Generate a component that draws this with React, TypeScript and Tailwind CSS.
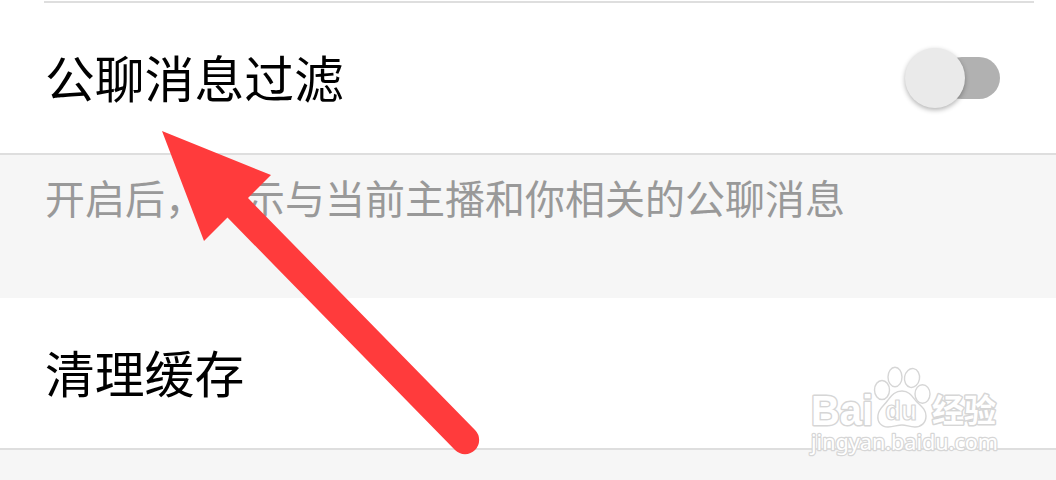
import React, { useState } from 'react';

type SettingRowProps = {
    label: string;
    children?: React.ReactNode;
};

function SettingRow({ label, children }: SettingRowProps) {
    return (
        <div className="flex flex-1 items-center justify-between pl-[45px] pr-14">
            <span className="pb-[2px] text-[49.8px] leading-none text-black">{label}</span>
            {children}
        </div>
    );
}

function Toggle({ checked, onChange }: { checked: boolean; onChange: (value: boolean) => void }) {
    return (
        <button
            role="switch"
            aria-checked={checked}
            aria-label="公聊消息过滤"
            onClick={() => onChange(!checked)}
            className={`flex h-[60px] w-[95px] items-center ${checked ? 'flex-row-reverse' : ''}`}
        >
            <span className="z-10 size-[60px] shrink-0 rounded-full bg-[#eaeaea] shadow-[0_2px_5px_rgba(0,0,0,0.3)]" />
            <span className="-mx-6 h-[42px] w-[59px] shrink-0 rounded-full bg-[#b1b1b1]" />
        </button>
    );
}

function PointerArrow() {
    return (
        <svg className="pointer-events-none absolute inset-0" width="1056" height="480" viewBox="0 0 1056 480">
            <path
                d="M162 131 L271 175 L248 198 L475 430 A14 14 0 0 1 455 450 L227.500 217.500 L204 241 Z"
                fill="#ff3b3c"
            />
        </svg>
    );
}

function Watermark() {
    return (
        <svg
            className="pointer-events-none absolute bottom-2 right-[46px]"
            width="212"
            height="116"
            viewBox="798 356 212 116"
            fill="#fff"
            stroke="#d6d6d6"
            strokeWidth="1.4"
            strokeLinejoin="round"
        >
            <ellipse cx="882" cy="390" rx="7.500" ry="9.500" />
            <ellipse cx="895" cy="377" rx="7" ry="9.800" />
            <ellipse cx="912" cy="378" rx="7.500" ry="9.500" transform="rotate(10 912 378)" />
            <ellipse cx="922.500" cy="394" rx="7.500" ry="9.300" />
            <path d="M902 391 C909 391 912 396 916 401 C921 406 926 409 926 416 C926 423 921 427 915 427 C909 427 907 425 902 425 C897 425 894 427 888 427 C881 427 877 422 878 415 C879 408 884 406 888 400 C892 395 895 391 902 391 Z" />
            <g style={{ paintOrder: 'stroke' }} strokeWidth="3">
                <text x="811" y="425" textLength="62" lengthAdjust="spacingAndGlyphs" className="font-['Liberation_Sans'] text-[42px] font-bold">
                    Bai
                </text>
                <text x="932" y="422" textLength="64" lengthAdjust="spacingAndGlyphs" className="font-['Noto_Sans_CJK_SC'] text-[32px] font-bold">
                    经验
                </text>
                <text x="811" y="450" textLength="187" lengthAdjust="spacingAndGlyphs" strokeWidth="2.500" className="font-['Noto_Sans'] text-[22px]">
                    jingyan.baidu.com
                </text>
            </g>
            <text x="885" y="420" textLength="32" lengthAdjust="spacingAndGlyphs" strokeWidth="1.2" className="font-['Liberation_Sans'] text-[27px] font-bold">
                du
            </text>
        </svg>
    );
}

export default function App() {
    const [filtrado, setFiltrado] = useState(false);

    return (
        <div className="relative flex h-[480px] w-[1056px] flex-col overflow-hidden bg-[#f6f6f6] font-['Noto_Sans_CJK_SC',sans-serif]">
            <div className="flex h-[155px] flex-col border-b-2 border-[#dedede] bg-white pt-px">
                <div className="ml-11 mr-[22px] h-0.5 bg-[#dedede]" />
                <SettingRow label="公聊消息过滤">
                    <Toggle checked={filtrado} onChange={setFiltrado} />
                </SettingRow>
            </div>

            <p className="h-[143px] pl-[45px] pt-[22px] text-[40px] leading-[40px] text-[#999999]">
                开启后，只示与当前主播和你相关的公聊消息
            </p>

            <div className="flex h-[152px] flex-col border-b-2 border-[#dedede] bg-white">
                <SettingRow label="清理缓存" />
            </div>

            <PointerArrow />
            <Watermark />
        </div>
    );
}
